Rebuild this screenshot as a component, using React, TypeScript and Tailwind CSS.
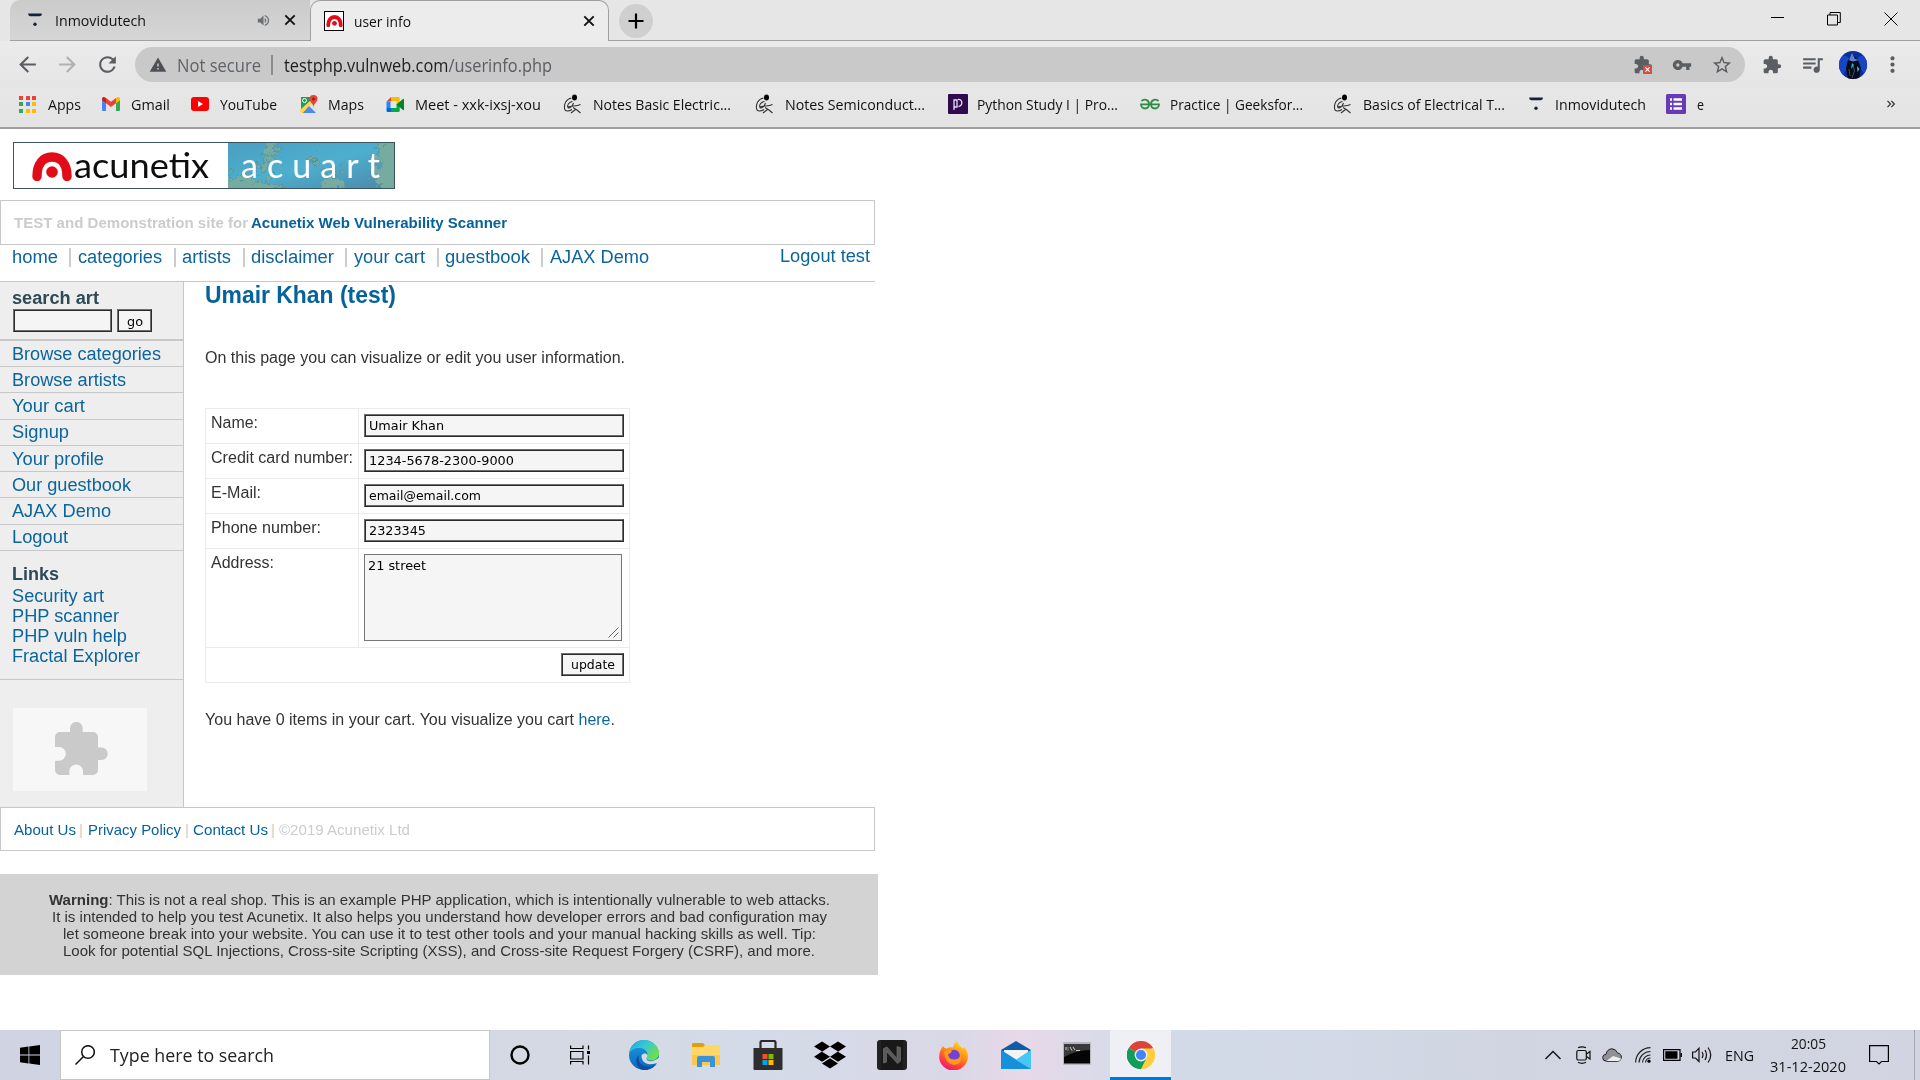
import React, { useLayoutEffect, useRef } from "react";
import { MdExtension, MdQueueMusic, MdVpnKey, MdStarOutline, MdWarning, MdVolumeUp, MdMoreVert, MdRefresh, MdArrowBack, MdArrowForward } from "react-icons/md";
import { FaDropbox } from "react-icons/fa";

/* Text stretched horizontally so that it fills the width of its box. */
function Fit({ className = "", children }: { className?: string; children: React.ReactNode }) {
  const box = useRef<HTMLSpanElement>(null);
  const inner = useRef<HTMLSpanElement>(null);
  useLayoutEffect(() => {
    if (!box.current || !inner.current) return;
    inner.current.style.transform = "none";
    const natural = inner.current.getBoundingClientRect().width;
    const wanted = box.current.getBoundingClientRect().width;
    if (natural > 0) inner.current.style.transform = `scaleX(${wanted / natural})`;
  });
  return (
    <span ref={box} className={`block shrink-0 whitespace-nowrap ${className}`}>
      <span ref={inner} className="inline-block origin-left align-top">{children}</span>
    </span>
  );
}

const CloseX = ({ className = "" }: { className?: string }) => (
  <svg viewBox="0 0 12 12" className={`h-[12px] w-[12px] shrink-0 ${className}`} stroke="#111" strokeWidth="1.9">
    <path d="M1.3 1.3 10.7 10.7M10.7 1.3 1.3 10.7" />
  </svg>
);

const InmoviIcon = ({ className = "" }: { className?: string }) => (
  <svg viewBox="0 0 14 14" className={`h-[14px] w-[14px] shrink-0 ${className}`} fill="#14233a">
    <path d="M0 .8Q0 .4.6.4H13.4Q14 .4 14 .9 13.6 3.3 11.5 3.3H2.5Q.5 3.3 0 .8Z" />
    <circle cx="7" cy="11.3" r="1.7" />
  </svg>
);

const Arch = ({ className = "" }: { className?: string }) => (
  <svg viewBox="0 0 40 29" className={`shrink-0 ${className}`}>
    <path d="M5 24.500C5 12 11 5 20 5S35 12 35 24.500" fill="none" stroke="#e20b17" strokeWidth="9.400" strokeLinecap="round" />
    <path d="M10.500 29V23C10.500 16 15 12 20 12S29.500 16 29.500 23V29Z" fill="#fff" />
    <circle cx="20" cy="20" r="5.800" fill="#e20b17" />
  </svg>
);

const CoilIcon = () => (
  <svg viewBox="0 0 20 20" className="h-[20px] w-[20px] shrink-0" fill="none" stroke="#333" strokeWidth="1.100">
    <ellipse cx="11.500" cy="3.500" rx="2.500" ry="3" fill="#000" stroke="none" />
    <path d="M8.500 4C3 5 .8 10 1.500 14.500 2 18 6 17.500 9 15.500M9.500 7.500C6 8 3.800 11 5 13.500 7 15 9.500 12 10.500 9M5 13C9 11.500 13 12.500 17.500 10.500M10 13.500 14 16 17.500 19M8 19 12.500 15.500" />
  </svg>
);

const AppsIcon = () => (
  <span className="grid h-[17px] w-[17px] shrink-0 grid-cols-3 gap-[2.500px]">
    {["bg-[#ea4335]", "bg-[#ea4335]", "bg-[#ea4335]", "bg-[#34a853]", "bg-[#4285f4]", "bg-[#fbbc05]", "bg-[#34a853]", "bg-[#fbbc05]", "bg-[#fbbc05]"].map((c, i) => (
      <i key={i} className={c} />
    ))}
  </span>
);

const GmailIcon = () => (
  <svg viewBox="0 0 18 14" className="h-[14px] w-[18px] shrink-0">
    <path d="M0 2.500V13a1 1 0 0 0 1 1H4V6Z" fill="#4285f4" />
    <path d="M18 2.500V13a1 1 0 0 1-1 1H14V6Z" fill="#34a853" />
    <path d="M14 1V6.200L18 3.300V1.800C18 0 16-.5 14.800.5Z" fill="#fbbc04" />
    <path d="M4 6.200V1L9 4.800 14 1V6.200L9 10Z" fill="#ea4335" />
    <path d="M0 1.800V3.300L4 6.200V1L3.200.5C2-.5 0 0 0 1.800Z" fill="#c5221f" />
  </svg>
);

const YoutubeIcon = () => (
  <svg viewBox="0 0 18 14" className="h-[14px] w-[18px] shrink-0">
    <rect width="18" height="14" rx="3" fill="#f00" />
    <path d="M7 4V10L12 7Z" fill="#fff" />
  </svg>
);

const MapsIcon = () => (
  <svg viewBox="0 0 18 18" className="h-[18px] w-[18px] shrink-0">
    <path d="M1 2H12V9L1 16Z" fill="#1e9e58" />
    <path d="M1 16 9 8 16 16V18H2Z" fill="#4285f4" />
    <path d="M0 15 11 5 13 8 3 18H1Z" fill="#fdd548" />
    <path d="M3 18 9 11 16 18Z" fill="#4a8af4" />
    <path d="M9 11 12 8 16 14V18Z" fill="#e0e0e0" />
    <circle cx="4.500" cy="5.500" r="2" fill="none" stroke="#fff" />
    <path d="M13.500 0A4 4 0 0 0 9.500 4C9.500 7 13 8 13.500 12 14 8 17.500 7 17.500 4A4 4 0 0 0 13.500 0Z" fill="#ea4335" />
    <circle cx="13.500" cy="4" r="1.500" fill="#8c231c" />
  </svg>
);

const MeetIcon = () => (
  <svg viewBox="0 0 18 15" className="h-[15px] w-[19px] shrink-0">
    <path d="M0 4.500 4.500 0V4.500Z" fill="#ea4335" />
    <path d="M4.500 0H12A1.200 1.200 0 0 1 13.200 1.200V6L10 7.500V4H4.500Z" fill="#fbbc04" />
    <path d="M0 4.500H4V11H0Z" fill="#2684fc" />
    <path d="M0 11H4.500V15H1.200A1.200 1.200 0 0 1 0 13.800Z" fill="#0066da" />
    <path d="M4.500 11H10V7.500L13.200 6V13.800A1.200 1.200 0 0 1 12 15H4.500Z" fill="#00ac47" />
    <path d="M10 7.500 16.500 2Q17.500 1.500 17.500 2.500V12.500Q17.500 13.500 16.500 13Z" fill="#00832d" />
  </svg>
);

const PythonStudyIcon = () => (
  <svg viewBox="0 0 20 20" className="h-[20px] w-[20px] shrink-0">
    <rect width="20" height="20" rx="1" fill="#2f0b4e" />
    <path d="M6 6H9V13H6ZM6 13V16M10 5.500C15 5 15 11.500 10.500 12.500" fill="none" stroke="#e9def5" strokeWidth="1.300" />
  </svg>
);

const GfgIcon = () => (
  <svg viewBox="0 0 20 12" className="h-[12px] w-[20px] shrink-0" fill="none" stroke="#2f8d46" strokeWidth="1.800">
    <path d="M1.500 3C4 .5 9 1.500 9 6 9 10 6.500 10.500 5 10.500 2.500 10.500 1 8.500 1 6.300H19C19 8.500 17.500 10.500 15 10.500 13.500 10.500 11 10 11 6 11 1.500 16 .5 18.500 3" />
  </svg>
);

const FormsIcon = () => (
  <svg viewBox="0 0 20 20" className="h-[20px] w-[20px] shrink-0">
    <rect width="20" height="20" rx="1.500" fill="#673ab7" />
    <path d="M4 5.500H6M4 10H6M4 14.500H6M7.500 5.500H16M7.500 10H16M7.500 14.500H16" stroke="#fff" strokeWidth="2.400" />
  </svg>
);

const bookmarks = [
  { icon: <AppsIcon />, slot: "w-[29px]", text: "Apps", w: "w-[33px] mr-[21px]" },
  { icon: <GmailIcon />, slot: "w-[29px]", text: "Gmail", w: "w-[39px] mr-[21px]" },
  { icon: <YoutubeIcon />, slot: "w-[29px]", text: "YouTube", w: "w-[57px] mr-[23px]" },
  { icon: <MapsIcon />, slot: "w-[28px]", text: "Maps", w: "w-[36px] mr-[22px]" },
  { icon: <MeetIcon />, slot: "w-[29px]", text: "Meet - xxk-ixsj-xou", w: "w-[126px] mr-[22px]" },
  { icon: <CoilIcon />, slot: "w-[30px]", text: "Notes Basic Electric...", w: "w-[138px] mr-[24px]" },
  { icon: <CoilIcon />, slot: "w-[30px]", text: "Notes Semiconduct...", w: "w-[140px] mr-[23px]" },
  { icon: <PythonStudyIcon />, slot: "w-[29px]", text: "Python Study I | Pro...", w: "w-[141px] mr-[22px]" },
  { icon: <GfgIcon />, slot: "w-[30px]", text: "Practice | Geeksfor...", w: "w-[133px] mr-[30px]" },
  { icon: <CoilIcon />, slot: "w-[30px]", text: "Basics of Electrical T...", w: "w-[142px] mr-[24px]" },
  { icon: <InmoviIcon />, slot: "w-[26px]", text: "Inmovidutech", w: "w-[91px] mr-[20px]" },
  { icon: <FormsIcon />, slot: "w-[31px]", text: "e", w: "w-[7px]" },
];

function TabStrip() {
  return (
    <div className="flex h-[41px] bg-[#e6e6e6] text-[15px] leading-[20px]">
      <div className="ml-[10px] flex h-[41px] w-[300px] items-center rounded-tl-[10px] border-b border-[#a0a0a0] bg-gradient-to-b from-[#cbcbcb] to-[#d6d6d6]">
        <InmoviIcon className="ml-[18px]" />
        <Fit className="ml-[13px] w-[91px]">Inmovidutech</Fit>
        <MdVolumeUp className="ml-[110px] h-[15px] w-[15px] text-[#6b6e72]" />
        <CloseX className="ml-[13px]" />
      </div>
      <div className="flex h-[42px] w-[299px] items-center rounded-t-[10px] border border-b-0 border-[#a0a0a0] bg-[#ececec] pb-[2px]">
        <span className="ml-[13px] flex h-[20px] w-[20px] items-center justify-center border border-black bg-white">
          <Arch className="h-[12px] w-[17px]" />
        </span>
        <Fit className="ml-[10px] w-[57px]">user info</Fit>
        <CloseX className="ml-[172px]" />
      </div>
      <div className="flex flex-1 border-b border-[#a0a0a0]">
        <div className="mt-[4px] ml-[10px] flex h-[34px] w-[34px] items-center justify-center rounded-full bg-[#cfcfcf]">
          <svg viewBox="0 0 16 16" className="h-[16px] w-[16px]" stroke="#000" strokeWidth="2.200"><path d="M8 .5V15.500M.5 8H15.500" /></svg>
        </div>
        <div className="mt-[12px] mr-[22px] ml-auto flex">
          <svg viewBox="0 0 14 14" className="h-[14px] w-[14px]" stroke="#000"><path d="M0 5.500H13" /></svg>
          <svg viewBox="0 0 14 14" className="ml-[42px] h-[14px] w-[14px]" stroke="#000" fill="none"><path d="M.5 3H10.500V13H.5ZM3 3V.5H13.300V10.500H10.500" /></svg>
          <svg viewBox="0 0 14 14" className="ml-[43px] h-[14px] w-[14px]" stroke="#000"><path d="M.5.5 13.500 13.500M13.500.5.5 13.500" /></svg>
        </div>
      </div>
    </div>
  );
}

function Toolbar() {
  return (
    <div className="flex h-[47px] items-center bg-gradient-to-b from-[#ebebeb] to-[#e5e5e5] text-[#5a5d61]">
      <MdArrowBack className="ml-[15px] h-[25px] w-[25px] shrink-0" />
      <MdArrowForward className="ml-[15px] h-[25px] w-[25px] shrink-0 text-[#b0b0b0]" />
      <MdRefresh className="ml-[15px] h-[25px] w-[25px] shrink-0" />
      <div className="ml-[15px] flex h-[35px] w-[1610px] items-center rounded-full bg-[#c9c9c9] text-[17.500px] leading-[24px]">
        <MdWarning className="ml-[14px] h-[18px] w-[18px] text-[#4d5054]" />
        <Fit className="ml-[10px] w-[84px] text-[#5f6368]">Not secure</Fit>
        <span className="ml-[10px] h-[20px] w-[2px] bg-[#8d8d8d]" />
        <Fit className="ml-[11px] w-[268px] text-[#5a5d61]"><span className="text-[#1f1f1f]">testphp.vulnweb.com</span>/userinfo.php</Fit>
        <span className="relative ml-auto">
          <MdExtension className="h-[20px] w-[20px]" />
          <span className="absolute top-[10px] left-[10px] flex h-[9px] w-[9px] items-center justify-center bg-[#dd4b3e]">
            <svg viewBox="0 0 6 6" className="h-[5px] w-[5px]" stroke="#fff" strokeWidth="1.400"><path d="M.5.5 5.500 5.500M5.500.5.5 5.500" /></svg>
          </span>
        </span>
        <MdVpnKey className="ml-[19px] h-[20px] w-[20px]" />
        <MdStarOutline className="mr-[12px] ml-[19px] h-[22px] w-[22px]" />
      </div>
      <MdExtension className="ml-[17px] h-[20px] w-[20px]" />
      <MdQueueMusic className="ml-[18px] h-[25px] w-[25px]" />
      <svg viewBox="0 0 28 28" className="ml-[14px] h-[28px] w-[28px]">
        <defs><clipPath id="face"><circle cx="14" cy="14" r="14" /></clipPath></defs>
        <g clipPath="url(#face)">
          <rect width="28" height="28" fill="#0b2f9a" />
          <path d="M0 6Q8 2 12 10L4 24H0ZM28 6Q20 2 18 10L24 22H28Z" fill="#1746c4" />
          <path d="M14 4 9 9 7 17 9 28H20L22 17 19 9Z" fill="#070b18" />
          <path d="M3 7 10 9 13 2 16 8 20 9 14 10.500Z" fill="#5a83d8" />
          <path d="M13 12 15 14 12 18ZM18 15 20.500 18 18.500 21Z" fill="#2cc6e8" />
          <path d="M14 14 15.500 20 13 27M10 18 11 25" stroke="#56607c" strokeWidth=".8" fill="none" />
        </g>
      </svg>
      <MdMoreVert className="ml-[13px] h-[25px] w-[25px]" />
    </div>
  );
}

function Bookmarks() {
  return (
    <div className="flex h-[41px] items-center border-b-2 border-[#9f9f9f] bg-gradient-to-b from-[#e7e7e7] to-[#e3e3e3] pb-[7px] pl-[19px] text-[15px] leading-[20px] text-[#111]">
      {bookmarks.map((b, i) => (
        <React.Fragment key={i}>
          <span className={`flex shrink-0 ${b.slot}`}>{b.icon}</span>
          <Fit className={b.w}>{b.text}</Fit>
        </React.Fragment>
      ))}
      <svg viewBox="0 0 8 8" className="mr-[25px] ml-auto h-[8px] w-[8px]" fill="none" stroke="#333" strokeWidth="1.200"><path d="M.5.8 3.500 4 .5 7.200M4.300.8 7.300 4 4.300 7.200" /></svg>
    </div>
  );
}

function Logo() {
  return (
    <div className="mt-[13px] ml-[13px] flex h-[47px] w-[382px] border border-[#3a535c] bg-white">
      <div className="flex w-[214px] items-start">
        <Arch className="mt-[9px] ml-[18px] h-[29px] w-[40px]" />
        <Fit className="ml-[2px] w-[135px] font-[Lato] text-[35px] leading-[42px] text-[#0d0d0d]">acunetix</Fit>
      </div>
      <div className="relative flex-1 overflow-hidden bg-[#489fc0]">
        <svg viewBox="0 0 166 45" className="absolute inset-0 h-[45px] w-[166px]">
          <defs>
            <linearGradient id="sea" x1="0" y1="0" x2="1" y2="1"><stop offset="0" stopColor="#4a9fc0" /><stop offset=".5" stopColor="#4dafcf" /><stop offset="1" stopColor="#4b88ab" /></linearGradient>
            <filter id="rough" x="-.1" y="-.1" width="1.200" height="1.200">
              <feTurbulence type="fractalNoise" baseFrequency=".16" numOctaves="3" seed="4" result="noise" />
              <feDisplacementMap in="SourceGraphic" in2="noise" scale="20" xChannelSelector="R" yChannelSelector="G" />
            </filter>
          </defs>
          <rect width="166" height="45" fill="url(#sea)" />
          <g filter="url(#rough)" fill="#76ab9f" stroke="#5795a5" strokeWidth="1.500">
            <path d="M34-5 39 10 34 18 25 26 40 28 44 15 52 8 44-5Z" />
            <path d="M-4 31 10 35 22 31 28 39 40 38 58 42 40 52H-4Z" />
            <path d="M152-5 150 12 142 8 150 25 144 34 156 52H174V-5Z" />
            <path d="M80 18 88 11 86 24ZM92 50 96 34 90 30 104 34 114 26 112 38 118 50Z" />
          </g>
        </svg>
        <Fit className="relative mt-[2px] ml-[13px] w-[148px] font-[Lato] text-[34px] leading-[40px] tracking-[9px] text-white">acuart</Fit>
      </div>
    </div>
  );
}

const nav = [
  { t: "home", w: "w-[46px]", s: "ml-[12px]", bar: "" },
  { t: "categories", w: "w-[84px]", s: "ml-[7px]", bar: "ml-[11px]" },
  { t: "artists", w: "w-[49px]", s: "ml-[6px]", bar: "ml-[12px]" },
  { t: "disclaimer", w: "w-[83px]", s: "ml-[6px]", bar: "ml-[12px]" },
  { t: "your cart", w: "w-[71px]", s: "ml-[7px]", bar: "ml-[11px]" },
  { t: "guestbook", w: "w-[85px]", s: "ml-[6px]", bar: "ml-[12px]" },
  { t: "AJAX Demo", w: "w-[99px]", s: "ml-[7px]", bar: "ml-[11px]" },
];

const side = [
  { t: "Browse categories", w: "w-[149px]", h: "h-[26px] pt-[3px]" },
  { t: "Browse artists", w: "w-[114px]", h: "h-[26px] pt-[3px]" },
  { t: "Your cart", w: "w-[73px]", h: "h-[27px] pt-[3px]" },
  { t: "Signup", w: "w-[57px]", h: "h-[26px] pt-[2px]" },
  { t: "Your profile", w: "w-[92px]", h: "h-[26px] pt-[3px]" },
  { t: "Our guestbook", w: "w-[119px]", h: "h-[26px] pt-[3px]" },
  { t: "AJAX Demo", w: "w-[99px]", h: "h-[27px] pt-[3px]" },
  { t: "Logout", w: "w-[56px]", h: "h-[26px] pt-[2px]" },
];

const links = [
  { t: "Security art", w: "w-[92px]" },
  { t: "PHP scanner", w: "w-[107px]" },
  { t: "PHP vuln help", w: "w-[115px]" },
  { t: "Fractal Explorer", w: "w-[128px]" },
];

/* Two-tone 2px frame used by the text inputs and the buttons. */
const frame = "border border-t-[#6e6e6e] border-l-[#6e6e6e] border-r-[#2b2b2b] border-b-[#2b2b2b] bg-[#f5f5f5] font-[DejaVu_Sans] text-[13px] text-black shadow-[inset_1px_1px_0_#2b2b2b,inset_-1px_-1px_0_#6e6e6e]";

function Sidebar() {
  return (
    <aside className="h-[525px] w-[184px] shrink-0 border-r border-[#c6c6c6] bg-[#eee] text-[18px] leading-[20px] text-[#0b659c]">
      <div className="h-[59px] border-b-2 border-[#c8c8c8] pt-[6px] pl-[12px]">
        <Fit className="w-[87px] font-bold text-[#2f4a55]">search art</Fit>
        <div className="mt-[1px] ml-[1px] flex gap-[5px]">
          <div className={`h-[23px] w-[99px] ${frame}`} />
          <div className={`flex h-[23px] w-[35px] items-center justify-center pt-[2px] ${frame}`}>
            <Fit className="w-[16px]">go</Fit>
          </div>
        </div>
      </div>
      {side.map((s) => (
        <div key={s.t} className={`border-b border-[#c8c8c8] pl-[12px] ${s.h}`}><Fit className={s.w}>{s.t}</Fit></div>
      ))}
      <div className="border-b border-[#c8c8c8] py-[13px] pl-[12px]">
        <Fit className="mb-[2px] w-[47px] font-bold text-[#2f4a55]">Links</Fit>
        {links.map((s) => <Fit key={s.t} className={s.w}>{s.t}</Fit>)}
      </div>
      <div className="mt-[28px] ml-[13px] h-[83px] w-[134px] bg-[#f7f7f7] pt-[14px] pl-[42px]">
        <svg viewBox="0 0 53 53" className="h-[53px] w-[53px]" fill="#cacaca">
          <path d="M5 10H15V6.500A6.300 6.500 0 0 1 27.700 6.500V10H38A5 5 0 0 1 43 15V25.500H46.500A6.200 6.200 0 0 1 46.500 38H43V48A5 5 0 0 1 38 53H28V49.500A6.800 7 0 0 0 14.300 49.500V53H5A5 5 0 0 1 0 48V38.700H4A6.800 6.800 0 0 0 4 25H0V15A5 5 0 0 1 5 10Z" />
        </svg>
      </div>
    </aside>
  );
}

const fields = [
  { l: "Name:", lw: "w-[47px]", v: "Umair Khan", vw: "w-[75px]" },
  { l: "Credit card number:", lw: "w-[142px]", v: "1234-5678-2300-9000", vw: "w-[145px]" },
  { l: "E-Mail:", lw: "w-[50px]", v: "email@email.com", vw: "w-[112px]" },
  { l: "Phone number:", lw: "w-[110px]", v: "2323345", vw: "w-[57px]" },
];

function Profile() {
  return (
    <main className="pl-[21px] text-[16px] leading-[19px] text-[#333]">
      <Fit className="w-[191px] text-[24px] leading-[25px] font-bold text-[#06629a]">Umair Khan (test)</Fit>
      <Fit className="mt-[42px] w-[420px] leading-[18px]">On this page you can visualize or edit you user information.</Fit>
      <div className="mt-[41px] w-[425px] border-t border-l border-[#ebebeb]">
        {fields.map((f) => (
          <div key={f.l} className="flex h-[35px] border-b border-[#ebebeb]">
            <div className="w-[153px] border-r border-[#ebebeb] pt-[4px] pl-[5px]"><Fit className={f.lw}>{f.l}</Fit></div>
            <div className="flex-1 border-r border-[#ebebeb] pt-[5px] pl-[5px]">
              <div className={`flex h-[23px] w-[260px] items-center pl-[4px] ${frame}`}><Fit className={f.vw}>{f.v}</Fit></div>
            </div>
          </div>
        ))}
        <div className="flex h-[99px] border-b border-[#ebebeb]">
          <div className="w-[153px] border-r border-[#ebebeb] pt-[4px] pl-[5px]"><Fit className="w-[63px]">Address:</Fit></div>
          <div className="flex-1 border-r border-[#ebebeb] pt-[5px] pl-[5px]">
            <div className="flex h-[87px] w-[258px] justify-between border border-[#767676] bg-[#f5f5f5] font-[DejaVu_Sans] text-[13px] text-black">
              <Fit className="mt-[1px] ml-[3px] w-[58px]">21 street</Fit>
              <svg viewBox="0 0 11 11" className="mr-[2px] mb-[2px] h-[11px] w-[11px] self-end" stroke="#666"><path d="M.5 10.500 10.500.5M5.500 10.500 10.500 5.500" /></svg>
            </div>
          </div>
        </div>
        <div className="flex h-[35px] justify-end border-r border-b border-[#ebebeb] pt-[5px] pr-[5px]">
          <div className={`flex h-[23px] w-[63px] items-center justify-center ${frame}`}><Fit className="w-[44px]">update</Fit></div>
        </div>
      </div>
      <Fit className="mt-[27px] w-[410px]">You have 0 items in your cart. You visualize you cart <span className="text-[#0b659c]">here</span>.</Fit>
    </main>
  );
}

function Page() {
  return (
    <div className="h-[901px] bg-white font-['Liberation_Sans',sans-serif]">
      <div className="flex h-[71px]"><Logo /></div>
      <div className="flex h-[45px] w-[875px] items-center border border-[#c8c8c8] text-[15px] leading-[20px] font-bold">
        <Fit className="ml-[13px] w-[234px] text-[#ccc]">TEST and Demonstration site for</Fit>
        <Fit className="ml-[3px] w-[256px] text-[#06629a]">Acunetix Web Vulnerability Scanner</Fit>
      </div>
      <div className="flex h-[37px] w-[875px] border-b border-[#c8c8c8] text-[18px] leading-[20px] text-[#0b659c]">
        {nav.map((n, i) => (
          <React.Fragment key={n.t}>
            {i > 0 && <span className={`mt-[3px] h-[19px] w-[2px] bg-[#ccc] ${n.bar}`} />}
            <Fit className={`mt-[2px] ${n.s} ${n.w}`}>{n.t}</Fit>
          </React.Fragment>
        ))}
        <Fit className="mt-[1px] mr-[5px] ml-auto w-[90px]">Logout test</Fit>
      </div>
      <div className="flex"><Sidebar /><Profile /></div>
      <div className="flex h-[44px] w-[875px] items-center border border-[#c8c8c8] pt-[2px] text-[15px] leading-[20px] text-[#06629a]">
        <Fit className="ml-[13px] w-[62px]">About Us</Fit>
        <span className="ml-[3px] w-[9px] text-[#ccc]">|</span>
        <Fit className="w-[93px]">Privacy Policy</Fit>
        <span className="ml-[4px] w-[8px] text-[#ccc]">|</span>
        <Fit className="w-[75px]">Contact Us</Fit>
        <span className="ml-[3px] w-[8px] text-[#ccc]">|</span>
        <Fit className="w-[131px] text-[#ccc]">©2019 Acunetix Ltd</Fit>
      </div>
      <div className="mt-[23px] flex h-[101px] w-[878px] flex-col items-center bg-[#d3d3d3] pt-[17px] text-[15px] leading-[17px] text-[#333]">
        <Fit className="w-[781px]"><b>Warning</b>: This is not a real shop. This is an example PHP application, which is intentionally vulnerable to web attacks.</Fit>
        <Fit className="w-[775px]">It is intended to help you test Acunetix. It also helps you understand how developer errors and bad configuration may</Fit>
        <Fit className="w-[753px]">let someone break into your website. You can use it to test other tools and your manual hacking skills as well. Tip:</Fit>
        <Fit className="w-[752px]">Look for potential SQL Injections, Cross-site Scripting (XSS), and Cross-site Request Forgery (CSRF), and more.</Fit>
      </div>
    </div>
  );
}

const EdgeIcon = () => (
  <svg viewBox="0 0 30 30" className="h-[30px] w-[30px]">
    <defs>
      <linearGradient id="eg" x1="0" y1="0" x2="1" y2=".6"><stop offset="0" stopColor="#1fa7dd" /><stop offset=".5" stopColor="#38c6d4" /><stop offset="1" stopColor="#6fe04a" /></linearGradient>
      <linearGradient id="eb" x1="0" y1="0" x2="0" y2="1"><stop offset="0" stopColor="#1c9be0" /><stop offset="1" stopColor="#0a68c0" /></linearGradient>
    </defs>
    <circle cx="15" cy="15" r="15" fill="url(#eb)" />
    <path d="M0 14C1 5 7 0 15 0S30 6 30 13C30 18 26 20.500 22 20.500 18 20.500 17 18.500 18 17 20 13 16.500 8.500 11 8 6 7.500 2 10 0 14Z" fill="url(#eg)" />
    <path d="M10 15C8 22 13 27 20 26.500 24 26.500 27 24.500 28.500 22.500 25 29 17 32 11 29 6 24 6.500 18 10 15Z" fill="#0c4f9e" />
    <path d="M12.500 16C12.500 13 17.500 12.500 18.500 15 19 17 16 18.500 18.500 20.500 22 22.500 26 20.500 30.500 17.500L30 22C26 24 22 24.500 19 24 14.500 23 12.500 19.500 12.500 16Z" fill="#d6dbe6" />
  </svg>
);

const FolderIcon = () => (
  <svg viewBox="0 0 28 24" className="h-[24px] w-[28px]">
    <path d="M0 1Q0 0 1 0H11L13 2V6H0Z" fill="#e0a00c" />
    <path d="M0 4H11L13 2H27Q28 2 28 3V22H0Z" fill="#ffd668" />
    <path d="M0 12H28V22H0Z" fill="#fdc94d" />
    <path d="M5 24V15Q5 13 7 13H21Q23 13 23 15V24H18V19H10V24Z" fill="#3a92d8" />
  </svg>
);

const StoreIcon = () => (
  <svg viewBox="0 0 30 30" className="h-[30px] w-[30px]">
    <path d="M7.500 9V2.500Q7.500 1 9 1H21Q22.500 1 22.500 2.500V9" fill="none" stroke="#2b2b2b" strokeWidth="2.200" />
    <path d="M.5 8H29.500V29Q29.500 30 28.500 30H1.500Q.5 30 .5 29Z" fill="#2e2e2e" />
    <path d="M9.500 14H14.500V19H9.500Z" fill="#f25022" /><path d="M15.500 14H20.500V19H15.500Z" fill="#7fba00" />
    <path d="M9.500 20H14.500V25H9.500Z" fill="#00a4ef" /><path d="M15.500 20H20.500V25H15.500Z" fill="#ffb900" />
  </svg>
);

const NIcon = () => (
  <svg viewBox="0 0 30 30" className="h-[30px] w-[30px]">
    <rect width="30" height="30" rx="3" fill="#222" /><path d="M4 0H26V30H4Z" fill="#191919" />
    <path d="M6.500 23V8.500L10 7 20 18.500V6.500L23.500 7.500V21L20.500 23.500 9.500 11.500V22Z" fill="#5a5a5a" stroke="#777" strokeWidth=".6" />
  </svg>
);

const FirefoxIcon = () => (
  <svg viewBox="0 0 29 29" className="h-[29px] w-[29px]">
    <defs><linearGradient id="ff" x1=".8" y1="0" x2=".3" y2="1"><stop offset="0" stopColor="#ffe226" /><stop offset=".45" stopColor="#ff8a16" /><stop offset=".8" stopColor="#ff3647" /><stop offset="1" stopColor="#e31587" /></linearGradient></defs>
    <path d="M4 5Q5.500 8 8 7.500 11 5.500 14 6.500 15 2 18 0 19 4 23 7 25 8 25.500 6 29 10 28.800 16A14.300 13.500 0 0 1 .2 16C.2 11 2 8 4 5Z" fill="url(#ff)" />
    <circle cx="15" cy="14.500" r="5.800" fill="#7340d8" />
    <path d="M5 11Q9 8 13 10.500 11 13 8.500 13 10 19 16 18.500 21 18 22 13 24 23 15 24 6 23 5 11Z" fill="#ff9a1c" />
  </svg>
);

const MailIcon = () => (
  <svg viewBox="0 0 30 28" className="h-[28px] w-[30px]">
    <path d="M15 0 30 9V12H0V9Z" fill="#0f5ba8" />
    <path d="M3 9H27V19H3Z" fill="#f4f4f4" />
    <path d="M0 9 15 19 30 9V28H0Z" fill="#2fb0ee" />
    <path d="M0 9 30 28H0Z" fill="#1790dc" /><path d="M30 9 15 19 30 28Z" fill="#45c8f5" />
  </svg>
);

const CmdIcon = () => (
  <svg viewBox="0 0 28 23" className="h-[23px] w-[28px]">
    <rect width="28" height="23" rx="1" fill="#b4b8bd" /><rect x="1" y="2" width="26" height="19.500" fill="#050505" />
    <path d="M1 2H27V8Q14 8 1 15Z" fill="#3a3a3a" /><path d="M3 5V8M5 5.500V6.500M5 7.500V8.500M7 5 9 8.500M10 5 12 8M13 8.500H17" stroke="#ddd" strokeWidth=".9" fill="none" />
  </svg>
);

const ChromeIcon = () => (
  <svg viewBox="0 0 48 48" className="h-[28px] w-[28px]">
    <path d="M24 24 3.200 12A24 24 0 0 1 44.800 12Z" fill="#db4437" />
    <path d="M24 24 44.800 12A24 24 0 0 1 24 48L24 36Z" fill="#ffcd40" />
    <path d="M24 24V48A24 24 0 0 1 3.200 12Z" fill="#0f9d58" />
    <path d="M24 13H45.300A24 24 0 0 1 24 48L33.500 29.500Z" fill="#ffcd40" />
    <path d="M14.500 29.500 3.200 12A24 24 0 0 0 24 48L33 30Z" fill="#0f9d58" />
    <circle cx="24" cy="24" r="11" fill="#f1f1f1" /><circle cx="24" cy="24" r="8.700" fill="#4285f4" />
  </svg>
);

function Taskbar() {
  return (
    <div className="flex h-[50px] items-center bg-[linear-gradient(90deg,#d0d4e2_0%,#d5d9e3_30%,#d3dbe8_38%,#dad8e7_50%,#e8d8e8_53%,#dadbe9_57%,#d2dae8_61%,#d3dae7_66%,#d1d5e2_78%,#d2d5e1_100%)]">
      <svg viewBox="0 0 20 20" className="ml-[20px] h-[20px] w-[20px] shrink-0"><path d="M0 2.700 8.500 1.500V9.500H0ZM9.300 1.400 20 0V9.500H9.300ZM0 10.400H8.500V18.500L0 17.300ZM9.300 10.400H20V20L9.300 18.600Z" /></svg>
      <div className="ml-[20px] flex h-[50px] w-[430px] shrink-0 items-center border border-[#c6c6c6] bg-white">
        <svg viewBox="0 0 20 20" className="ml-[14px] h-[20px] w-[20px]" fill="none" stroke="#111" strokeWidth="1.500"><circle cx="13" cy="7" r="6.300" /><path d="M8.500 11.500.5 19.500" /></svg>
        <Fit className="ml-[15px] w-[164px] text-[18.500px] leading-[26px] text-[#222]">Type here to search</Fit>
      </div>
      <svg viewBox="0 0 20 20" className="ml-[20px] h-[20px] w-[20px] shrink-0" fill="none" stroke="#000" strokeWidth="2.400"><circle cx="10" cy="10" r="8.500" /></svg>
      <svg viewBox="0 0 20 20" className="ml-[40px] h-[20px] w-[20px] shrink-0" fill="none" stroke="#000" strokeWidth="1.200"><path d="M.6.5V3.500H13V.5M.6 6.500H13V14H.6ZM.6 19.500V16.500H13V19.500M18.500.5V4.500M18.500 10.500V19.500" /><path d="M17 6H20V9H17Z" fill="#000" stroke="none" /></svg>
      <span className="ml-[39px]"><EdgeIcon /></span>
      <span className="ml-[33px]"><FolderIcon /></span>
      <span className="ml-[33px]"><StoreIcon /></span>
      <FaDropbox className="ml-[31px] h-[32px] w-[32px] shrink-0 text-black" />
      <span className="ml-[31px]"><NIcon /></span>
      <span className="ml-[32px]"><FirefoxIcon /></span>
      <span className="ml-[33px]"><MailIcon /></span>
      <span className="ml-[32px] mb-[3px]"><CmdIcon /></span>
      <div className="ml-[19px] flex h-[50px] w-[61px] items-center justify-center border-b-[3px] border-[#0078d7] bg-[#eff0f5] pt-[2px]"><ChromeIcon /></div>
      <div className="mr-[5px] ml-auto flex items-center">
        <svg viewBox="0 0 16 10" className="h-[10px] w-[16px]" fill="none" stroke="#111" strokeWidth="1.400"><path d="M.5 9 8 1.500 15.500 9" /></svg>
        <svg viewBox="0 0 15 18" className="ml-[15px] h-[18px] w-[15px]" fill="none" stroke="#111" strokeWidth="1.200"><rect x=".8" y="4.500" width="9.500" height="9.500" rx="1.500" /><path d="M10.500 8 14 5.500V13L10.500 10.500M2 1.800Q6-.2 10 1.800M2 16.300Q6 18.300 10 16.300" /></svg>
        <svg viewBox="0 0 20 14" className="ml-[11px] h-[14px] w-[20px]" stroke="#222"><path d="M4.500 13.300Q.6 13 .6 9.500 1 6.500 4 6.300 5 1 10 .8 14 1 15.500 5 19.500 5.500 19.400 9.500 19 13.300 15.500 13.300Z" fill="#8f9196" /><path d="M4.500 13 11 8 19 10.500Q18.500 13 15.500 13Z" fill="#eee" stroke="none" /></svg>
        <svg viewBox="0 0 16 16" className="ml-[13px] h-[16px] w-[16px]" fill="none" stroke="#222" strokeWidth="1.200"><path d="M.6 15.500A15 15 0 0 1 15.500.6M4 15.500A11.500 11.500 0 0 1 15.500 4.500M7.500 15.500A8 8 0 0 1 15.500 8M10.500 15.500A5 5 0 0 1 15.500 11" /><circle cx="14" cy="14.200" r="1.600" fill="#000" stroke="none" /></svg>
        <svg viewBox="0 0 19 12" className="ml-[12px] h-[12px] w-[19px]"><path d="M.6.6H17V11.400H.6Z" fill="none" stroke="#000" strokeWidth="1.200" /><path d="M2.300 2.300H14.500V9.700H2.300ZM17.500 4H19V8H17.500Z" /></svg>
        <svg viewBox="0 0 20 18" className="ml-[10px] h-[18px] w-[20px]" fill="none" stroke="#111" strokeWidth="1.200"><path d="M.6 6H3.500L7 2.200V15.500L3.500 12H.6ZM10 6Q12 9 10 12M13 4Q16 9 13 14M16 1.500Q21.500 9 16 16.500" /></svg>
        <Fit className="ml-[13px] w-[29px] text-[15px] leading-[20px] text-[#111]">ENG</Fit>
        <div className="ml-[16px] flex w-[76px] flex-col items-center text-[15px] leading-[23px] text-[#111]">
          <Fit className="w-[35px]">20:05</Fit>
          <Fit className="w-[76px]">31-12-2020</Fit>
        </div>
        <svg viewBox="0 0 20 20" className="ml-[23px] h-[20px] w-[20px]" fill="none" stroke="#000" strokeWidth="1.200"><path d="M.6.6H19.400V16.500H12.500L10 19 7.500 16.500H.6Z" /></svg>
        <span className="ml-[25px] h-[50px] w-px bg-[#a3a6b0]" />
      </div>
    </div>
  );
}

export default function App() {
  return (
    <div className="flex h-[1080px] w-[1920px] flex-col overflow-hidden bg-white font-['Open_Sans','Noto_Sans',sans-serif] text-[#111]">
      <TabStrip />
      <Toolbar />
      <Bookmarks />
      <Page />
      <Taskbar />
    </div>
  );
}
